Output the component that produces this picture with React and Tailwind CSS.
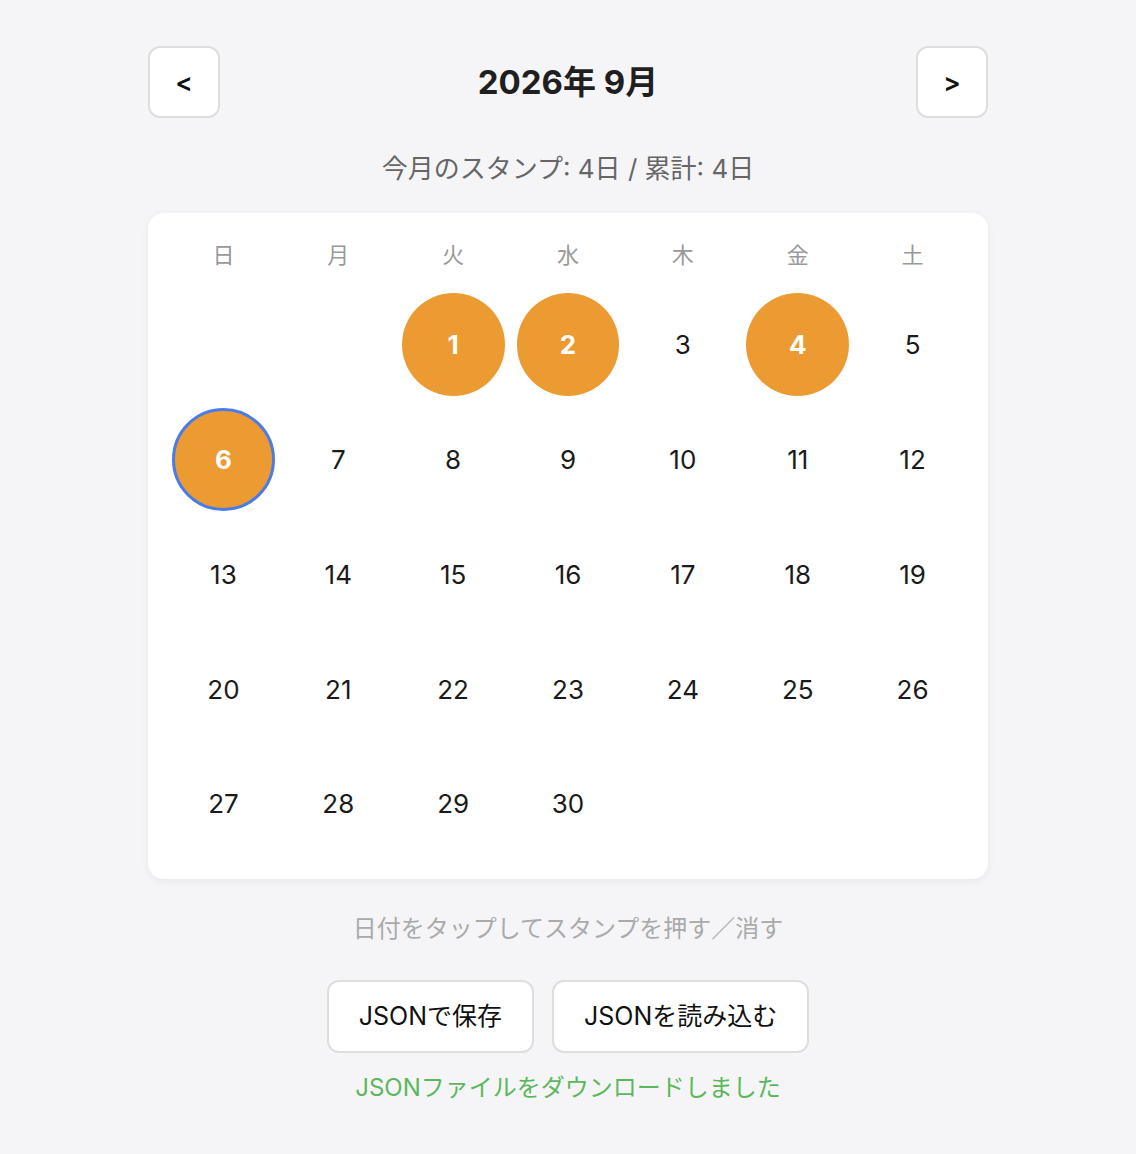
import React from "react";

const FONT = { fontFamily: 'Inter, "Noto Sans CJK JP", sans-serif' };

const weekdays = ["日", "月", "火", "水", "木", "金", "土"];
const stamped = new Set([1, 2, 4, 6]);
const today = 6;

export default function App() {
  const cells = [];
  for (let i = 0; i < 2; i++) cells.push(null);
  for (let d = 1; d <= 30; d++) cells.push(d);

  return (
    <div className="min-h-screen bg-[#f5f5f7] pt-[46px] pb-10" style={FONT}>
      <div className="mx-auto w-[840px]">
        <div className="flex items-center justify-between">
          <button className="w-[72px] h-[72px] rounded-[12px] border-2 border-[#dedede] bg-white text-[26px] font-semibold text-[#111] flex items-center justify-center">
            &lt;
          </button>
          <h1 className="text-[33px] font-bold text-[#1f1f1f] leading-none">2026年 9月</h1>
          <button className="w-[72px] h-[72px] rounded-[12px] border-2 border-[#dedede] bg-white text-[26px] font-semibold text-[#111] flex items-center justify-center">
            &gt;
          </button>
        </div>

        <p className="mt-[33px] text-center text-[26px] leading-[36px] text-[#666]">
          今月のスタンプ: 4日 / 累計: 4日
        </p>

        <div className="mt-[26px] bg-white rounded-[16px] p-6 shadow-[0_2px_8px_rgba(0,0,0,0.06)]">
          <div className="grid grid-cols-7 gap-3 mb-[20px]">
            {weekdays.map((w) => (
              <div key={w} className="text-center text-[22px] leading-[36px] text-[#999]">
                {w}
              </div>
            ))}
          </div>
          <div className="grid grid-cols-7 gap-3">
            {cells.map((d, i) => {
              if (d === null) return <div key={"e" + i} className="aspect-square" />;
              const s = stamped.has(d);
              const t = d === today;
              return (
                <div
                  key={d}
                  className={
                    "aspect-square rounded-full flex items-center justify-center text-[26px] " +
                    (s ? "bg-[#eb9b31] text-white font-bold " : "text-[#1a1a1a] ") +
                    (t ? "border-[3px] border-[#4a7be6]" : "")
                  }
                >
                  {d}
                </div>
              );
            })}
          </div>
        </div>

        <p className="mt-[32px] text-center text-[24px] leading-[36px] text-[#aaa]">
          日付をタップしてスタンプを押す／消す
        </p>

        <div className="mt-[33px] flex justify-center gap-[18px]">
          <button className="h-[73px] px-[30px] rounded-[12px] border-2 border-[#dedede] bg-white text-[25px] text-[#111]">
            JSONで保存
          </button>
          <button className="h-[73px] px-[30px] rounded-[12px] border-2 border-[#dedede] bg-white text-[25px] text-[#111]">
            JSONを読み込む
          </button>
        </div>

        <p className="mt-[17px] text-center text-[24px] leading-[36px] text-[#5cb85c]">
          JSONファイルをダウンロードしました
        </p>
      </div>
    </div>
  );
}
